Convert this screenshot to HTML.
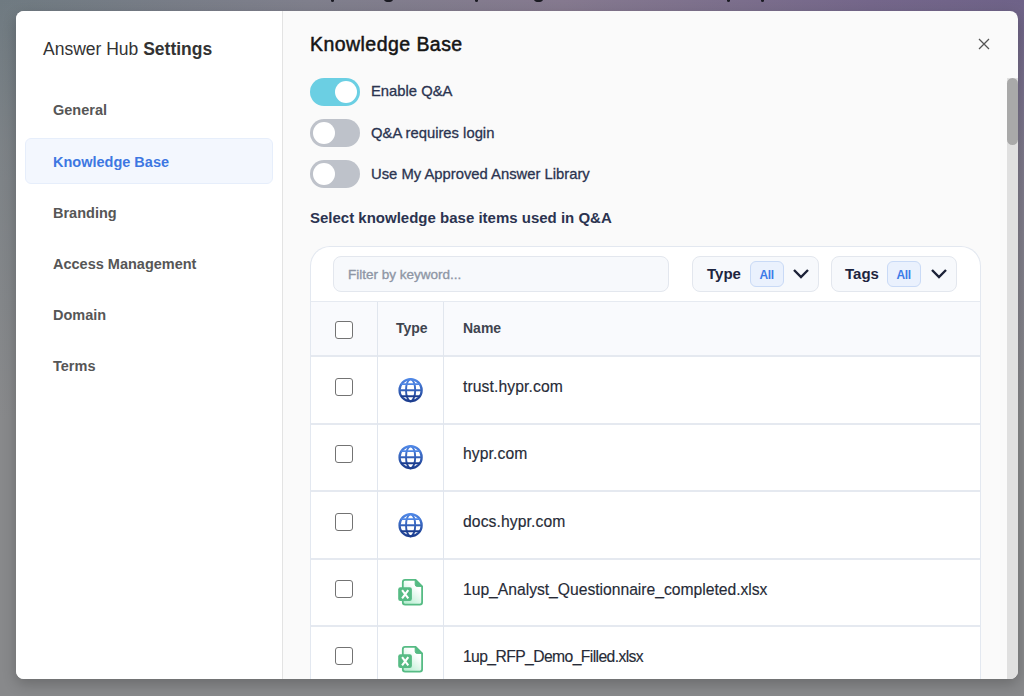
<!DOCTYPE html>
<html><head><meta charset="utf-8">
<style>
*{box-sizing:border-box;margin:0;padding:0}
html,body{width:1024px;height:696px;overflow:hidden}
body{position:relative;font-family:"Liberation Sans",sans-serif;
background:linear-gradient(180deg,rgba(136,137,139,0) 0px,rgba(136,137,139,.55) 150px,#88898b 420px),linear-gradient(90deg,#6f7a81 0%,#7f7f8c 30%,#85798f 55%,#74668a 85%,#6e6288 100%);}
.t{position:absolute;white-space:nowrap;line-height:1}
.modal{position:absolute;left:16px;top:11px;width:1002px;height:668px;border-radius:8px;overflow:hidden;background:#fafafa;box-shadow:0 5px 14px rgba(0,0,0,.22)}
.side{position:absolute;left:0;top:0;width:267px;height:668px;background:#fff;border-right:1px solid #e3e3e3}
.active{position:absolute;left:9px;top:127px;width:248px;height:46px;background:#f3f7fe;border:1px solid #e6eefb;border-radius:6px}
.nav{font-weight:bold;font-size:14.5px;color:#565656;left:53px}
.tog{position:absolute;left:310px;width:50px;height:28px;border-radius:14px;background:#bec2ca}
.tog i{position:absolute;left:3px;top:3px;width:22px;height:22px;border-radius:50%;background:#fff}
.tog.on{background:#6bcfe3}
.tog.on i{left:25px}
.lbl{font-size:14.8px;color:#2b3450;-webkit-text-stroke:0.3px #2b3450}
.card{position:absolute;left:310px;top:246px;width:671px;height:460px;background:#fff;border:1.5px solid #e3e8f0;border-radius:20px 20px 0 0;border-bottom:none}
.filter{position:absolute;left:333px;top:256px;width:336px;height:36px;background:#f7f9fc;border:1px solid #e3e7ee;border-radius:8px}
.dd{position:absolute;top:256px;height:36px;background:#f7f9fc;border:1px solid #e3e7ee;border-radius:8px}
.badge{position:absolute;top:261px;width:34px;height:26px;background:#eaf1fd;border:1px solid #c9daf6;border-radius:6px}
.hdr{position:absolute;left:311px;top:301px;width:669px;height:56px;background:#f9fafd;border-top:1px solid #e6eaf1;border-bottom:2px solid #e5e9f0}
.row{position:absolute;left:311px;width:669px;border-bottom:2px solid #e5e9f0;background:#fff}
.vl{position:absolute;top:302px;width:1px;height:400px;background:#e1e6ee}
.cb{position:absolute;left:335px;width:18px;height:18px;border:1.5px solid #737373;border-radius:3px;background:#fff}
.ic{display:block}
.name{font-size:15.7px;letter-spacing:0.1px;color:#272b37;left:463px;-webkit-text-stroke:0.15px #272b37}
</style></head><body>
<div style="position:absolute;left:331px;top:-2px;width:3px;height:4px;border-radius:2px;background:#1a1a22"></div>
<div style="position:absolute;left:384px;top:-4px;width:9px;height:6px;border-radius:50%;background:#1a1a22"></div>
<div style="position:absolute;left:475px;top:-2px;width:3px;height:4px;border-radius:2px;background:#1a1a22"></div>
<div style="position:absolute;left:534px;top:-4px;width:9px;height:6px;border-radius:50%;background:#1a1a22"></div>
<div style="position:absolute;left:727px;top:-2px;width:3px;height:4px;border-radius:2px;background:#1a1a22"></div>
<div style="position:absolute;left:761px;top:-2px;width:3px;height:4px;border-radius:2px;background:#1a1a22"></div>
<div class="modal">
  <div class="side">
    <div class="active"></div>
  </div>
</div>
<div style="position:absolute;left:16px;top:11px;width:1002px;height:668px;border-radius:8px;overflow:hidden"><div style="position:absolute;left:-16px;top:-11px;width:1024px;height:696px">
<!-- sidebar text -->
<div class="t" style="left:43px;top:40.5px;font-size:17.5px;color:#333">Answer Hub <b>Settings</b></div>
<div class="t nav" style="top:103px">General</div>
<div class="t nav" style="top:154.6px;color:#3d77e2">Knowledge Base</div>
<div class="t nav" style="top:205.7px">Branding</div>
<div class="t nav" style="top:257.2px">Access Management</div>
<div class="t nav" style="top:308.4px">Domain</div>
<div class="t nav" style="top:359.3px">Terms</div>

<!-- right -->
<div class="t" style="left:310px;top:34.6px;font-size:19.5px;letter-spacing:0.45px;color:#151515;-webkit-text-stroke:0.5px #151515">Knowledge Base</div>
<svg style="position:absolute;left:978px;top:38px" width="12" height="12" viewBox="0 0 12 12"><path d="M1 1L11 11M11 1L1 11" stroke="#555" stroke-width="1.25"/></svg>
<div style="position:absolute;left:1007px;top:78px;width:11px;height:601px;background:#e0e0e0"></div>
<div style="position:absolute;left:1007px;top:78px;width:11px;height:67px;background:#a9a9a9;border-radius:5.5px"></div>

<div class="tog on" style="top:78px"><i></i></div>
<div class="tog" style="top:119px"><i></i></div>
<div class="tog" style="top:160px"><i></i></div>
<div class="t lbl" style="left:371px;top:84.2px">Enable Q&amp;A</div>
<div class="t lbl" style="left:371px;top:125.5px">Q&amp;A requires login</div>
<div class="t lbl" style="left:371px;top:166.5px">Use My Approved Answer Library</div>
<div class="t" style="left:310px;top:209.5px;font-size:15px;font-weight:bold;color:#2b3350">Select knowledge base items used in Q&amp;A</div>

<div class="card"></div>
<div class="filter"></div>
<div class="t" style="left:348px;top:267.7px;font-size:13.5px;color:#8e96a5;-webkit-text-stroke:0.35px #8e96a5">Filter by keyword...</div>
<div class="dd" style="left:692px;width:127px"></div>
<div class="dd" style="left:831px;width:126px"></div>
<div class="t" style="left:707px;top:266px;font-size:15px;font-weight:bold;color:#1d2540">Type</div>
<div class="t" style="left:845px;top:266px;font-size:15px;font-weight:bold;color:#1d2540">Tags</div>
<div class="badge" style="left:750px"></div>
<div class="badge" style="left:887px"></div>
<div class="t" style="left:759.5px;top:268.5px;font-size:12px;letter-spacing:-0.4px;font-weight:bold;color:#3d7be8">All</div>
<div class="t" style="left:896.5px;top:268.5px;font-size:12px;letter-spacing:-0.4px;font-weight:bold;color:#3d7be8">All</div>
<svg style="position:absolute;left:792px;top:268px" width="18" height="12" viewBox="0 0 18 12"><path d="M2 2L9 9L16 2" fill="none" stroke="#1c2238" stroke-width="2.4"/></svg>
<svg style="position:absolute;left:930px;top:268px" width="18" height="12" viewBox="0 0 18 12"><path d="M2 2L9 9L16 2" fill="none" stroke="#1c2238" stroke-width="2.4"/></svg>

<div class="hdr"></div>
<div class="row" style="top:357px;height:68px"></div>
<div class="row" style="top:425px;height:67px"></div>
<div class="row" style="top:492px;height:67.5px"></div>
<div class="row" style="top:559.5px;height:67.5px"></div>
<div class="row" style="top:627px;height:60px;border-bottom:none"></div>
<div class="vl" style="left:377px"></div>
<div class="vl" style="left:443px"></div>
<div class="cb" style="top:321px"></div>
<div class="t" style="left:396px;top:321px;font-size:14px;font-weight:bold;color:#40444f">Type</div>
<div class="t" style="left:463px;top:321px;font-size:14px;font-weight:bold;color:#40444f">Name</div>

<div class="cb" style="top:378px"></div>
<div class="cb" style="top:445px"></div>
<div class="cb" style="top:513px"></div>
<div class="cb" style="top:580px"></div>
<div class="cb" style="top:647px"></div>
<div class="t name" style="top:379.0px">trust.hypr.com</div>
<div class="t name" style="top:446.0px">hypr.com</div>
<div class="t name" style="top:513.7px">docs.hypr.com</div>
<div class="t name" style="top:581.6px;letter-spacing:-0.02px">1up_Analyst_Questionnaire_completed.xlsx</div>
<div class="t name" style="top:648.9px;letter-spacing:-0.6px">1up_RFP_Demo_Filled.xlsx</div>

<div style="position:absolute;left:398px;top:378px"><svg class="ic" viewBox="0 0 25 25" width="25" height="25"><defs><linearGradient id="gg1" x1="0" y1="0" x2="0" y2="1"><stop offset="0" stop-color="#4f87e6"/><stop offset="1" stop-color="#1c3d8e"/></linearGradient></defs><g fill="none" stroke="url(#gg1)"><circle cx="12.6" cy="12.2" r="11.1" stroke-width="2.2"/><ellipse cx="12.6" cy="12.2" rx="4.6" ry="11" stroke-width="1.9"/><path d="M1.5 12.2H23.7M3 6.1H22.2M3 18.3H22.2" stroke-width="1.9"/></g></svg></div>
<div style="position:absolute;left:398px;top:445px"><svg class="ic" viewBox="0 0 25 25" width="25" height="25"><defs><linearGradient id="gg2" x1="0" y1="0" x2="0" y2="1"><stop offset="0" stop-color="#4f87e6"/><stop offset="1" stop-color="#1c3d8e"/></linearGradient></defs><g fill="none" stroke="url(#gg2)"><circle cx="12.6" cy="12.2" r="11.1" stroke-width="2.2"/><ellipse cx="12.6" cy="12.2" rx="4.6" ry="11" stroke-width="1.9"/><path d="M1.5 12.2H23.7M3 6.1H22.2M3 18.3H22.2" stroke-width="1.9"/></g></svg></div>
<div style="position:absolute;left:398px;top:513px"><svg class="ic" viewBox="0 0 25 25" width="25" height="25"><defs><linearGradient id="gg3" x1="0" y1="0" x2="0" y2="1"><stop offset="0" stop-color="#4f87e6"/><stop offset="1" stop-color="#1c3d8e"/></linearGradient></defs><g fill="none" stroke="url(#gg3)"><circle cx="12.6" cy="12.2" r="11.1" stroke-width="2.2"/><ellipse cx="12.6" cy="12.2" rx="4.6" ry="11" stroke-width="1.9"/><path d="M1.5 12.2H23.7M3 6.1H22.2M3 18.3H22.2" stroke-width="1.9"/></g></svg></div>
<div style="position:absolute;left:397px;top:578px"><svg class="ic" viewBox="0 0 28 28" width="28" height="28"><defs><linearGradient id="xg1" x1="1" y1="0" x2="0.3" y2="1"><stop offset="0.35" stop-color="#fff"/><stop offset="1" stop-color="#b9eed2"/></linearGradient></defs><path d="M5.8 4.2Q5.8 1.9 8.1 1.9H18.6L25.1 8.4V24.3Q25.1 26.6 22.8 26.6H8.1Q5.8 26.6 5.8 24.3Z" fill="url(#xg1)" stroke="#56bb84" stroke-width="1.8" stroke-linejoin="round"/><path d="M18.2 1.9V6.5Q18.2 8.4 20.1 8.4H25.1Z" fill="#56bb84" stroke="#56bb84" stroke-width="1" stroke-linejoin="round"/><rect x="1.2" y="9.2" width="13.7" height="13.7" rx="2.2" fill="#56bb84"/><path d="M5.1 12.2L11.3 20.3M11.3 12.2L5.1 20.3" stroke="#fff" stroke-width="2.1"/></svg></div>
<div style="position:absolute;left:397px;top:645px"><svg class="ic" viewBox="0 0 28 28" width="28" height="28"><defs><linearGradient id="xg2" x1="1" y1="0" x2="0.3" y2="1"><stop offset="0.35" stop-color="#fff"/><stop offset="1" stop-color="#b9eed2"/></linearGradient></defs><path d="M5.8 4.2Q5.8 1.9 8.1 1.9H18.6L25.1 8.4V24.3Q25.1 26.6 22.8 26.6H8.1Q5.8 26.6 5.8 24.3Z" fill="url(#xg2)" stroke="#56bb84" stroke-width="1.8" stroke-linejoin="round"/><path d="M18.2 1.9V6.5Q18.2 8.4 20.1 8.4H25.1Z" fill="#56bb84" stroke="#56bb84" stroke-width="1" stroke-linejoin="round"/><rect x="1.2" y="9.2" width="13.7" height="13.7" rx="2.2" fill="#56bb84"/><path d="M5.1 12.2L11.3 20.3M11.3 12.2L5.1 20.3" stroke="#fff" stroke-width="2.1"/></svg></div>
</div></div>

</body></html>
